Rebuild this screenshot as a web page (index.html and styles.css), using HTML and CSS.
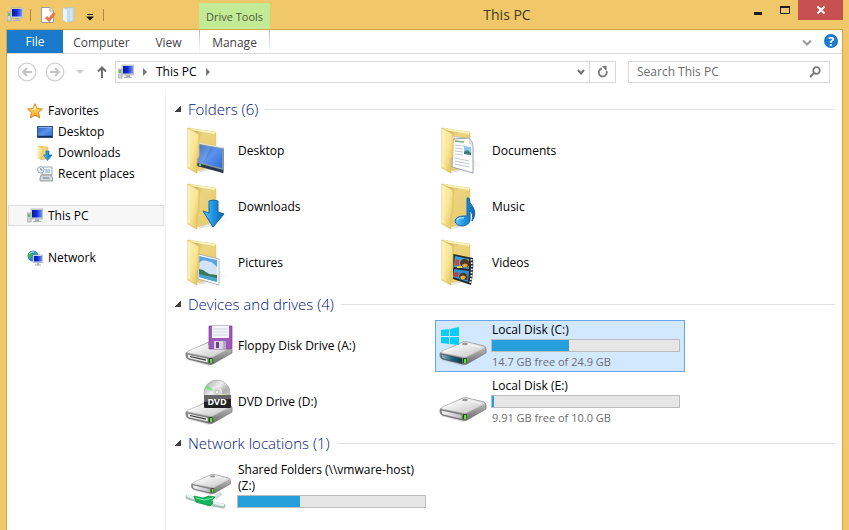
FILE: index.html
```html
<!DOCTYPE html>
<html lang="en">
<head>
<meta charset="utf-8">
<title>This PC</title>
<link rel="stylesheet" href="styles.css">
</head>
<body>
<svg class="defs" aria-hidden="true">
  <defs>
    <linearGradient id="g-front" x1="0" x2="1" y1="0" y2="1"><stop offset="0" stop-color="#fff0b0"/><stop offset=".5" stop-color="#fae698"/><stop offset="1" stop-color="#dfba50"/></linearGradient>
    <linearGradient id="g-back" x1="0" x2="1" y1="0" y2="1"><stop offset="0" stop-color="#b99a42"/><stop offset=".35" stop-color="#ecd480"/><stop offset="1" stop-color="#e6c866"/></linearGradient>
    <linearGradient id="g-shadow" x1="0" x2="1"><stop offset="0" stop-color="#888" stop-opacity=".5"/><stop offset="1" stop-color="#aaa" stop-opacity="0"/></linearGradient>
    <linearGradient id="g-screen" x1="0" x2="1" y1="0" y2="1"><stop offset="0" stop-color="#2a5bb8"/><stop offset=".5" stop-color="#5b93ea"/><stop offset="1" stop-color="#2f6bd6"/></linearGradient>
    <linearGradient id="g-blue" x1="0" x2="1"><stop offset="0" stop-color="#6cc6f5"/><stop offset=".5" stop-color="#1c93e0"/><stop offset="1" stop-color="#0d66b4"/></linearGradient>
    <linearGradient id="g-top" x1="0" x2="1" y1="0" y2="1"><stop offset="0" stop-color="#9d9d9d"/><stop offset=".35" stop-color="#f2f2f2"/><stop offset="1" stop-color="#c0c0c0"/></linearGradient>
    <linearGradient id="g-side" x1="0" x2="0" y1="0" y2="1"><stop offset="0" stop-color="#d4d4d4"/><stop offset="1" stop-color="#6b6b6b"/></linearGradient>
    <linearGradient id="g-face" x1="0" x2="1"><stop offset="0" stop-color="#fafafa"/><stop offset="1" stop-color="#b9b9c0"/></linearGradient>
    <linearGradient id="g-teal" x1="0" x2="1"><stop offset="0" stop-color="#9bb8c2"/><stop offset=".5" stop-color="#206b82"/><stop offset="1" stop-color="#0d3940"/></linearGradient>
    <linearGradient id="g-disc" x1="0" x2="1" y1="0" y2="1"><stop offset="0" stop-color="#9a9a9a"/><stop offset=".4" stop-color="#f0f0f0"/><stop offset=".6" stop-color="#b0b0b0"/><stop offset="1" stop-color="#dadada"/></linearGradient>
    <linearGradient id="g-navy" x1="0" x2="1"><stop offset="0" stop-color="#0a1a9c"/><stop offset=".45" stop-color="#1029d2"/><stop offset="1" stop-color="#6f93ff"/></linearGradient>
    <linearGradient id="g-star" x1="0" x2="0" y1="0" y2="1"><stop offset="0" stop-color="#ffe27a"/><stop offset="1" stop-color="#fba919"/></linearGradient>
  </defs>

  <symbol id="folder-back" viewBox="0 0 48 48">
    <path d="M13 46L46 38L31 31Z" fill="url(#g-shadow)" opacity=".6"/>
    <path d="M3 1L30 5L31 6V38L13 44Z" fill="url(#g-back)" stroke="#e3c873" stroke-width=".6"/>
    <path d="M3 1L30 5V7L5 3Z" fill="#fff3bd"/>
  </symbol>
  <symbol id="folder-front" viewBox="0 0 48 48">
    <path d="M3 1L12 6Q14 7 14 9V29L12 32V46L3 41Z" fill="url(#g-front)" stroke="#dcbb58" stroke-width=".8"/>
    <path d="M4 2.500V40" stroke="#fff8d8" stroke-width="1"/>
  </symbol>

  <symbol id="i-desktop" viewBox="0 0 48 48">
    <use href="#folder-back"/>
    <path d="M12 16L39 21V46L12 38Z" fill="#8296a6"/>
    <path d="M14 18L37 22V41L14 35Z" fill="url(#g-screen)"/>
    <path d="M14 18L26 20L18 36L14 35Z" fill="#fff" opacity=".16"/>
    <path d="M12 36L38 43V46L12 39Z" fill="#26384c"/>
    <path d="M12 16L39 21" stroke="#dde6ec"/>
    <circle cx="15" cy="38" r="1.200" fill="#7ec63b"/>
    <use href="#folder-front"/>
  </symbol>
  <symbol id="i-documents" viewBox="0 0 48 48">
    <use href="#folder-back"/>
    <path d="M13 9L30 12V41L13 38Z" fill="#eef1f5" stroke="#bbb" stroke-width=".7"/>
    <path d="M14 12L30 11Q34 15 34 19V46L13 40Z" fill="#fff" stroke="#8d98a2" stroke-width=".9"/>
    <path d="M16 14l9 1" stroke="#7ea982" stroke-width="1.500"/>
    <path d="M16 18l9 1M16 21l8 1M16 24l8 1M16 27l8 1M16 31l14 3M16 34l14 3M16 37l14 3" stroke="#c3c9d3"/>
    <path d="M25 19L32 20V28L25 27Z" fill="#8fc7ef"/><path d="M25 25L28 23L32 26V28L25 27Z" fill="#3b7d73"/>
    <path d="M30 11V17L34 19Z" fill="#ddd"/>
    <use href="#folder-front"/>
  </symbol>
  <symbol id="i-downloads" viewBox="0 0 48 48">
    <use href="#folder-back"/><use href="#folder-front"/>
    <path d="M24 18Q28 16 33 18V29L39 31L28 44L18 28L24 30Z" fill="url(#g-blue)" stroke="#1266a4"/>
  </symbol>
  <symbol id="i-music" viewBox="0 0 48 48">
    <use href="#folder-back"/><use href="#folder-front"/>
    <path d="M28 15L30 15Q30 20 34 24Q38 31 33 38Q35 30 31 28V37Q30 42 24 43Q17 43 16 38Q17 33 25 33H28Z" fill="url(#g-blue)" stroke="#1668ad"/>
    <path d="M18 37Q20 34 25 35" stroke="#a5e0ff" stroke-width="1.500" fill="none"/>
  </symbol>
  <symbol id="i-pictures" viewBox="0 0 48 48">
    <use href="#folder-back"/>
    <path d="M13 15L34 20V46L13 40Z" fill="#fff" stroke="#9ca5ad" stroke-width=".8"/>
    <path d="M14 17L32 21V43L14 38Z" fill="#5aa2e4"/>
    <path d="M14 24Q17 20 22 22Q27 22 32 28V36H14Z" fill="#cfe5f7"/>
    <path d="M14 30L18 31L24 35L32 36V40L14 36Z" fill="#3d7762"/>
    <path d="M14 35L32 39V43L14 38Z" fill="#49a6c9"/>
    <use href="#folder-front"/>
  </symbol>
  <symbol id="i-videos" viewBox="0 0 48 48">
    <use href="#folder-back"/>
    <path d="M14 15L34 19Q35 32 32 46L14 40Z" fill="#242a2e"/>
    <path d="M16 17L30 20V30L15 28Z" fill="#38a3dc"/><path d="M15 30L30 32L29 43L14 38Z" fill="#2f8fd2"/>
    <path d="M21 24Q23 19 27 20Q31 22 30 27Q27 30 23 28Z" fill="#59341c"/><path d="M23 26Q26 23 29 26Q27 30 24 28Z" fill="#e5a63c"/>
    <path d="M17 20l3 1v6l-4-1z" fill="#e23d31"/><path d="M18 28l5 0" stroke="#f0d445" stroke-width="2"/>
    <path d="M20 37Q22 33 26 34Q29 36 28 41L21 40Z" fill="#59341c"/><path d="M21 38Q24 35 27 38Q25 42 22 40Z" fill="#e6b33c"/><path d="M15 34l4-1v5l-4-1z" fill="#d9352d"/>
    <path d="M32.500 20Q33.500 33 31 45" fill="none" stroke="#fff" stroke-width="1.800" stroke-dasharray="1.600 1.600"/>
    <use href="#folder-front"/>
  </symbol>

  <symbol id="drive-body" viewBox="0 0 48 26">
    <path d="M2 20L24 26L48 11L44 8Z" fill="#777" opacity=".25"/>
    <path d="M22 3Q24 1 28 2L45 6Q47 7 47 9V13L28 24Q26 25 23 24L3 19Q1 18 1 16V13Z" fill="url(#g-side)" stroke="#777" stroke-width=".7"/>
    <path d="M22 3Q24 1 28 2L45 6Q47 8 44 9L28 17Q26 18 23 17L3 13Q1 12 3 11Z" fill="url(#g-top)" stroke="#a5a5a5" stroke-width=".5"/>
    <path d="M5 11.500L24 3.500L42 7.500" fill="none" stroke="#fff" stroke-width=".8" opacity=".8"/>
    <ellipse cx="26" cy="4" rx="3" ry="1.300" fill="#999"/>
  </symbol>
  <symbol id="drive-led" viewBox="0 0 48 26"><path d="M24 18h3.500v5h-3.500z" fill="#234d18"/><path d="M25 19h2v4h-2z" fill="#53ee28"/></symbol>
  <symbol id="drive-slot" viewBox="0 0 48 26">
    <use href="#drive-body"/>
    <path d="M2 14L23 18.500V23L3 18.500Z" fill="#eee" stroke="#555" stroke-width=".6"/><path d="M5 16.500L21 20.200" stroke="#333" stroke-width="1.200"/>
    <use href="#drive-led"/>
  </symbol>
  <symbol id="drive-plain" viewBox="0 0 48 26">
    <use href="#drive-body"/><path d="M2 14L23 18.500V23.500L3 18.500Z" fill="url(#g-face)" stroke="#555" stroke-width=".6"/><use href="#drive-led"/>
  </symbol>

  <symbol id="i-floppy" viewBox="0 0 48 48">
    <use href="#drive-slot" y="18" width="48" height="26"/>
    <path d="M24 4H47V26L45 27H24Z" fill="#9d5ab9" stroke="#7c3d99" stroke-width=".7"/>
    <path d="M27 4H44V16H27Z" fill="#f8f8fc"/><path d="M28 7H43M28 10H43M28 13H43" stroke="#c8d4df"/>
    <path d="M29 19H41V27H29Z" fill="#d9d3e2"/><path d="M31 20H34V26H31Z" fill="#6b4380"/><path d="M38 19H41V27H38Z" fill="#b8a6c8"/>
  </symbol>
  <symbol id="i-system" viewBox="0 0 48 48">
    <use href="#drive-body" y="18" width="48" height="26"/>
    <path d="M2 32L23 36.500V41.500L3 36.500Z" fill="url(#g-teal)" stroke="#345" stroke-width=".6"/>
    <use href="#drive-led" y="18" width="48" height="26"/>
    <path d="M2 8L10 7V14H2ZM11 7L20 5V14H11ZM2 15H10V22L2 21ZM11 15H20V23L11 22Z" fill="#08cdf8"/>
  </symbol>
  <symbol id="i-disk" viewBox="0 0 48 48"><use href="#drive-plain" y="18" width="48" height="26"/></symbol>
  <symbol id="i-share" viewBox="0 0 48 48">
    <path d="M30 37L36 32" stroke="#cfdcd8" stroke-width="4"/>
    <use href="#drive-plain" x="5" y="12" width="42" height="22"/>
    <path d="M3 36L15 40M23 42L38 45" stroke="#a9bfba" stroke-width="5" stroke-linecap="round"/>
    <path d="M3 35L15 39M25 41L38 44" stroke="#edf6f4" stroke-width="2.500" stroke-linecap="round"/>
    <path d="M9 35L18 37L24 35L30 36L27 39L28 42L25 45L18 43L11 41Z" fill="#14b35e" stroke="#0b8a3c" stroke-width=".7"/>
    <path d="M11 37L19 39L28 37" stroke="#7bf0aa" fill="none"/>
  </symbol>

  <symbol id="s-pc" viewBox="0 0 16 16">
    <path d="M0 5H4V14H0Z" fill="#d1d5d7" stroke="#8b9296" stroke-width=".6"/><path d="M1 6h2v3H1z" fill="#64c63f"/>
    <rect x="4" y="1" width="12" height="10" fill="#d6dbe0" stroke="#9ba2a9" stroke-width=".6"/><rect x="5" y="2" width="10" height="7.500" fill="url(#g-navy)"/>
    <path d="M8 11h4v2h2v1H6v-1h2z" fill="#abb1b5"/>
  </symbol>
  <symbol id="s-star" viewBox="0 0 16 16"><path d="M8 .7L10.200 5.500L15.500 6L11.500 9.600L12.700 15L8 12.200L3.300 15L4.500 9.600L.5 6L5.800 5.500Z" fill="url(#g-star)" stroke="#e08326"/><path d="M8 2.500L9.500 6.200L6.500 7L2.500 6.700L6.400 6.200Z" fill="#fff2b4"/></symbol>
  <symbol id="s-desktop" viewBox="0 0 16 16"><rect x=".5" y="2.500" width="15" height="11" fill="url(#g-screen)" stroke="#30568c"/><path d="M1 12.500H15" stroke="#182f55" stroke-width="1.500"/><path d="M1.500 3.500h13" stroke="#8bb5ee"/></symbol>
  <symbol id="s-downloads" viewBox="0 0 16 16"><path d="M1 1L11 2V13L5 15L1 13Z" fill="url(#g-back)" stroke="#d9b85a" stroke-width=".5"/><path d="M1 1L5 3V15L1 13Z" fill="url(#g-front)"/><path d="M9 6H12V10H15L10.500 15.500L6.500 10H9Z" fill="url(#g-blue)" stroke="#1266a4" stroke-width=".6"/></symbol>
  <symbol id="s-recent" viewBox="0 0 16 16"><path d="M5 1H15V9H5Z" fill="#f4f7f9" stroke="#8d979e" stroke-width=".8"/><path d="M8 4h5M8 6h5" stroke="#74a3c9"/><path d="M4 9H14L15.500 12V15H3V12Z" fill="#d3d8db" stroke="#858c91" stroke-width=".8"/><path d="M6 12h6" stroke="#70787e"/><circle cx="3.800" cy="3.800" r="3.200" fill="#f6f8fa" stroke="#8b979f" stroke-width=".9"/><path d="M3.800 2V4H5.500" fill="none" stroke="#3c5e7a" stroke-width=".8"/></symbol>
  <symbol id="s-network" viewBox="0 0 16 16"><circle cx="6" cy="6" r="5.500" fill="#2f86d9"/><path d="M3 1.500Q6 3 5 5L3 9Q0 7 1 4ZM7 1L11 4L8 5Z" fill="#3fb544"/><path d="M2 4q3-3 5-2" stroke="#caf0ff" fill="none"/><rect x="6" y="5" width="10" height="7.500" fill="#e0e4e9" stroke="#8f9aa8" stroke-width=".5"/><rect x="7" y="6" width="8" height="5.500" fill="url(#g-navy)"/><path d="M10 12.500h2v2h2v1H8v-1h2z" fill="#a4aab1"/></symbol>
  <symbol id="s-back" viewBox="0 0 20 20"><circle cx="10" cy="10" r="8.800" fill="none" stroke="#d2d2d2" stroke-width="1.300"/><path d="M15 10H6M10 6L6 10L10 14" fill="none" stroke="#c4c4c4" stroke-width="2"/></symbol>
</svg>

<div class="window">
  <header class="titlebar">
    <div class="quick">
      <svg class="ico"><use href="#s-pc"/></svg>
      <span class="sep"></span>
      <button class="plain" aria-label="Properties"><svg class="ico" viewBox="0 0 16 16"><path d="M1.500 .5H10L13.500 4V15.500H1.500Z" fill="#fff" stroke="#9b9b9b"/><path d="M10 .5V4H13.500" fill="#eee" stroke="#aaa"/><path d="M6 10L9 13L14.500 6" fill="none" stroke="#e4784b" stroke-width="3"/></svg></button>
      <button class="plain" aria-label="New folder"><svg class="ico" viewBox="0 0 16 16"><path d="M2 1L13 0.500V14L6 15L2 13Z" fill="#c7dcec" stroke="#a8c4d9" stroke-width=".6"/><path d="M2 1L6 3V15.500L2 13Z" fill="#eaf4fb"/><path d="M10 1V14" stroke="#e4eff7"/></svg></button>
      <button class="plain more" aria-label="Customize toolbar"><svg width="8" height="8" viewBox="0 0 8 8"><path d="M1 1.500H7" stroke="#111"/><path d="M0 3.500H8L4 7.500Z" fill="#111"/></svg></button>
      <span class="sep"></span>
    </div>
    <div class="tooltab">Drive Tools</div>
    <h1>This PC</h1>
    <div class="controls">
      <button aria-label="Minimize"><svg width="10" height="10"><path d="M1 7h8v3H1z" fill="#1e1e1e"/></svg></button>
      <button aria-label="Maximize"><svg width="10" height="10"><path d="M.5 1.500H9.500V8.500H.5Z" fill="none" stroke="#1e1e1e"/><path d="M0 2H10" stroke="#1e1e1e" stroke-width="2"/></svg></button>
      <button class="close" aria-label="Close"><svg width="10" height="10"><path d="M1.500 1.500L8.500 8.500M8.500 1.500L1.500 8.500" stroke="#fff" stroke-width="2"/></svg></button>
    </div>
  </header>

  <div class="body">
    <nav class="ribbon">
      <button class="file">File</button>
      <button class="computer">Computer</button>
      <button class="view">View</button>
      <button class="manage">Manage</button>
      <span class="fill"></span>
      <button class="icon-btn" aria-label="Expand ribbon"><svg width="10" height="8"><path d="M1 1.500L5 5.500L9 1.500" fill="none" stroke="#9a9a9a" stroke-width="2"/></svg></button>
      <button class="icon-btn help" aria-label="Help">?</button>
    </nav>

    <div class="navbar">
      <button class="icon-btn" aria-label="Back"><svg width="20" height="20"><use href="#s-back"/></svg></button>
      <button class="icon-btn forward" aria-label="Forward"><svg width="20" height="20"><use href="#s-back"/></svg></button>
      <button class="icon-btn history" aria-label="Recent locations"><svg width="8" height="5"><path d="M0 0H8L4 4Z" fill="#ccc"/></svg></button>
      <button class="icon-btn up" aria-label="Up"><svg width="10" height="12"><path d="M5 12V1M1 5.500L5 1.500L9 5.500" fill="none" stroke="#6e6e6e" stroke-width="2"/></svg></button>
      <div class="address">
        <svg class="ico"><use href="#s-pc"/></svg>
        <svg width="4" height="8"><path d="M0 0L4 4L0 8Z" fill="#777"/></svg>
        <a href="#">This PC</a>
        <svg width="4" height="8"><path d="M0 0L4 4L0 8Z" fill="#777"/></svg>
        <span class="fill"></span>
        <button class="icon-btn drop" aria-label="Previous locations"><svg width="8" height="7"><path d="M1 1L4 4.500L7 1" fill="none" stroke="#707070" stroke-width="2"/></svg></button>
        <button class="icon-btn refresh" aria-label="Refresh"><svg width="12" height="12"><path d="M5 2.500A4 4 0 1 0 9.500 5" fill="none" stroke="#777" stroke-width="1.800"/><path d="M5 0H9.500V5L7.500 3Z" fill="#777"/></svg></button>
      </div>
      <label class="search">
        <input type="text" placeholder="Search This PC" aria-label="Search This PC">
        <svg width="12" height="12"><circle cx="7.500" cy="4.500" r="3.300" fill="none" stroke="#777" stroke-width="1.700"/><path d="M5 7L1 11" stroke="#777" stroke-width="2.200"/></svg>
      </label>
    </div>

    <div class="content">
      <nav class="tree">
        <a href="#"><svg class="ico"><use href="#s-star"/></svg>Favorites</a>
        <a href="#" class="child"><svg class="ico"><use href="#s-desktop"/></svg>Desktop</a>
        <a href="#" class="child"><svg class="ico"><use href="#s-downloads"/></svg>Downloads</a>
        <a href="#" class="child"><svg class="ico"><use href="#s-recent"/></svg>Recent places</a>
        <a href="#" class="root selected"><svg class="ico"><use href="#s-pc"/></svg>This PC</a>
        <a href="#" class="root"><svg class="ico"><use href="#s-network"/></svg>Network</a>
      </nav>

      <main>
        <section>
          <h2>Folders (6)</h2>
          <div class="grid">
            <a href="#" class="item"><svg class="big"><use href="#i-desktop"/></svg><span class="info">Desktop</span></a>
            <a href="#" class="item"><svg class="big"><use href="#i-documents"/></svg><span class="info">Documents</span></a>
            <a href="#" class="item"><svg class="big"><use href="#i-downloads"/></svg><span class="info">Downloads</span></a>
            <a href="#" class="item"><svg class="big"><use href="#i-music"/></svg><span class="info">Music</span></a>
            <a href="#" class="item"><svg class="big"><use href="#i-pictures"/></svg><span class="info">Pictures</span></a>
            <a href="#" class="item"><svg class="big"><use href="#i-videos"/></svg><span class="info">Videos</span></a>
          </div>
        </section>
        <section>
          <h2>Devices and drives (4)</h2>
          <div class="grid">
            <a href="#" class="item"><svg class="big"><use href="#i-floppy"/></svg><span class="info">Floppy Disk Drive (A:)</span></a>
            <a href="#" class="item active"><svg class="big"><use href="#i-system"/></svg><span class="info"><span>Local Disk (C:)</span><span class="bar"><span style="width:41%"></span></span><span class="free">14.7 GB free of 24.9 GB</span></span></a>
            <a href="#" class="item">
              <svg class="big" viewBox="0 0 48 48">
                <use href="#drive-slot" y="21" width="48" height="26"/>
                <circle cx="32" cy="15" r="13" fill="url(#g-disc)" stroke="#aaa" stroke-width=".7"/>
                <path d="M32 15L20 10L22 7Z" fill="#5cea65" opacity=".8"/><path d="M32 15L42 23L44 20Z" fill="#e9a8e8" opacity=".8"/><path d="M32 15L44 17V20Z" fill="#f3ef83" opacity=".8"/>
                <circle cx="32" cy="14" r="4.500" fill="#d8d8d8" stroke="#eee"/><circle cx="32" cy="14" r="1.800" fill="#fff" stroke="#999" stroke-width=".5"/>
                <rect x="19" y="17" width="27" height="13" rx="1" fill="#222"/><path d="M19 17H46V21Q32 21 19 24Z" fill="#666"/>
                <text x="32" y="27" text-anchor="middle" class="dvd-text">DVD</text>
              </svg>
              <span class="info">DVD Drive (D:)</span>
            </a>
            <a href="#" class="item"><svg class="big"><use href="#i-disk"/></svg><span class="info"><span>Local Disk (E:)</span><span class="bar"><span style="width:1%"></span></span><span class="free">9.91 GB free of 10.0 GB</span></span></a>
          </div>
        </section>
        <section>
          <h2>Network locations (1)</h2>
          <div class="grid">
            <a href="#" class="item"><svg class="big"><use href="#i-share"/></svg><span class="info"><span>Shared Folders (\\vmware-host)</span><span>(Z:)</span><span class="bar"><span style="width:33%"></span></span></span></a>
          </div>
        </section>
      </main>
    </div>
  </div>
</div>
</body>
</html>
```
FILE: styles.css
```css
* { box-sizing: border-box; }
body {
  margin: 0;
  background: #f0c869;
  color: #000;
  font: 12px/14px "Open Sans", "Noto Sans", sans-serif;
}
a { color: inherit; text-decoration: none; }
button { border: 0; margin: 0; padding: 0; background: none; font: inherit; color: inherit; }
svg { display: block; flex: none; }
.defs { position: absolute; width: 0; height: 0; }
.ico { width: 16px; height: 16px; }
.fill { flex: 1; }

.window { display: flex; flex-direction: column; min-height: 100vh; padding: 0 6px; }

.titlebar { display: flex; height: 29px; }
.quick { display: flex; align-items: center; width: 193px; padding-left: 1px; }
.quick .sep { width: 1px; height: 12px; margin: 0 9px 0 7px; background: #a98a45; }
.quick .plain { margin-right: 5px; }
.quick .more { margin: 4px 2px 0 4px; }
.tooltab { width: 71px; margin-top: 3px; background: #c3eb96; color: #4a5a38; font-size: 11px; line-height: 27px; text-align: center; }
h1 { flex: 1; margin: 0; color: #44391e; font-size: 14px; font-weight: 400; line-height: 29px; text-align: center; }
.controls { display: flex; height: 20px; }
.controls button { display: flex; align-items: center; justify-content: center; width: 27px; }
.controls .close { width: 45px; background: #c75050; }

.body { flex: 1; display: flex; flex-direction: column; border: 1px solid #d0a749; border-bottom: 0; background: #fff; }

.ribbon { display: flex; height: 24px; border-bottom: 1px solid #dadbdc; color: #444; }
.ribbon button { padding-top: 2px; }
.ribbon .file { width: 56px; padding-top: 0; background: #1979ca; color: #fff; }
.ribbon .computer { width: 77px; }
.ribbon .view { width: 57px; }
.ribbon .manage {
  width: 71px;
  margin-left: 2px;
  background:
    linear-gradient(#bbb, #fff) left / 1px 100% no-repeat,
    linear-gradient(#bbb, #fff) right / 1px 100% no-repeat;
}
.icon-btn { display: flex; align-items: center; justify-content: center; flex: none; }
.ribbon .help { width: 14px; height: 14px; margin: 4px 4px 0 12px; padding: 0; border-radius: 7px; background: #1979ca; color: #fff; font-size: 13px; font-weight: 700; }

.navbar { display: flex; align-items: center; height: 36px; padding: 0 12px 0 10px; }
.navbar .forward { margin-left: 8px; transform: rotate(180deg); }
.navbar .history { margin-left: 11px; }
.navbar .up { margin: 0 8px 0 13px; }
.address { flex: 1; display: flex; align-items: center; gap: 9px; height: 22px; border: 1px solid #d9d9d9; padding-left: 2px; }
.address .refresh { width: 26px; height: 20px; border-left: 1px solid #d9d9d9; margin-left: -5px; }
.search { display: flex; align-items: center; width: 202px; height: 22px; margin-left: 12px; padding: 0 8px; border: 1px solid #d9d9d9; }
.search input { flex: 1; min-width: 0; border: 0; padding: 0; outline: 0; background: none; font: inherit; }
.search input::placeholder { color: #6d6d6d; opacity: 1; }

.content { flex: 1; display: flex; }
.tree { width: 159px; padding: 10px 1px 0; border-right: 1px solid #f1f1f1; }
.tree a { display: flex; align-items: center; gap: 5px; height: 21px; padding-left: 18px; border: 1px solid transparent; }
.tree .child { padding-left: 28px; }
.tree .root { margin-top: 21px; }
.tree .selected { border-color: #dedede; background: #f7f7f7; }

main { flex: 1; min-width: 0; padding: 4px 7px 0 9px; }
h2 { display: flex; align-items: center; gap: 7px; height: 31px; margin: 0; padding-bottom: 2px; color: #00147a; font-size: 15px; font-weight: 300; line-height: 20px; }
h2::before { content: ""; width: 6px; height: 6px; background: linear-gradient(135deg, transparent 45%, #404040 50%); }
h2::after { content: ""; flex: 1; height: 1px; margin-top: 2px; background: #e2e2e2; }
.grid { display: grid; grid-template-columns: repeat(auto-fill, 250px); gap: 4px; padding-left: 6px; }
.item { display: flex; align-items: center; gap: 4px; height: 52px; padding: 0 4px 0 3px; border: 1px solid transparent; }
.active { border-color: #66a7e8; background: #d1e8ff; }
.big { width: 48px; height: 48px; }
.info { flex: 1; display: flex; flex-direction: column; gap: 2px; padding-left: 1px; white-space: nowrap; }
.bar { height: 13px; margin-left: -1px; border: 1px solid #bcbcbc; background: #e6e6e6; }
.bar span { display: block; height: 100%; background: #26a0da; }
.free { color: #6d6d6d; font-size: 11px; line-height: 15px; }
.dvd-text { fill: #fff; font: 700 9px "Open Sans", sans-serif; }
```
